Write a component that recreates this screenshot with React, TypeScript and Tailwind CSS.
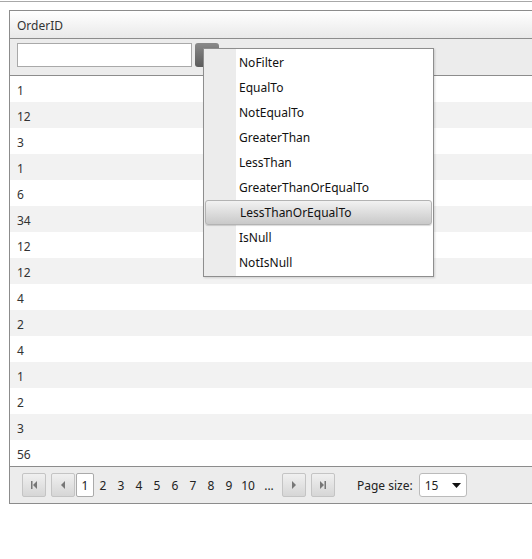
import React from 'react';

const rows = [1, 12, 3, 1, 6, 34, 12, 12, 4, 2, 4, 1, 2, 3, 56];
const filters = [
  'NoFilter',
  'EqualTo',
  'NotEqualTo',
  'GreaterThan',
  'LessThan',
  'GreaterThanOrEqualTo',
  'LessThanOrEqualTo',
  'IsNull',
  'NotIsNull',
];

function PagerButton({ kind }: { kind: 'first' | 'prev' | 'next' | 'last' }) {
  return (
    <div className="w-6 h-6 rounded-[2px] border border-[#c4c4c4] bg-gradient-to-b from-[#f0f0f0] to-[#d6d6d6] flex items-center justify-center">
      <svg width="10" height="10" viewBox="0 0 10 10">
        {kind === 'first' && (
          <>
            <rect x="2" y="1" width="1.5" height="8" fill="#777" />
            <path d="M8 1 L4 5 L8 9 Z" fill="#777" />
          </>
        )}
        {kind === 'prev' && <path d="M7 1 L3 5 L7 9 Z" fill="#777" />}
        {kind === 'next' && <path d="M3 1 L7 5 L3 9 Z" fill="#777" />}
        {kind === 'last' && (
          <>
            <path d="M2 1 L6 5 L2 9 Z" fill="#777" />
            <rect x="6.5" y="1" width="1.5" height="8" fill="#777" />
          </>
        )}
      </svg>
    </div>
  );
}

export default function App() {
  return (
    <div className="w-[532px] h-[559px] overflow-hidden bg-white text-[12px] text-[#333] font-['Segoe_UI','Noto_Sans',sans-serif] pt-px">
      <div className="h-px bg-[#a8a8a8]" />
      <div className="relative ml-[9px] mt-2 w-[560px] border border-[#8c8c8c]">
        {/* Header */}
        <div className="h-[28px] flex items-center pl-[7px] pt-[2px] bg-gradient-to-b from-white to-[#e9e9e9] border-b border-[#8c8c8c]">
          OrderID
        </div>

        {/* Filter row */}
        <div className="h-[37px] flex items-start pt-1 gap-[3px] pl-[7px] bg-[#ececec] border-b border-[#8c8c8c]">
          <div className="w-[175px] h-6 bg-white border border-[#a9a9a9]" />
          <div className="w-6 h-6 rounded-[3px] bg-gradient-to-b from-[#8a8a8a] to-[#5c5c5c]" />
        </div>

        {/* Rows */}
        {rows.map((r, i) => (
          <div key={i} className={`h-[26px] flex items-center pl-[7px] pt-[3px] ${i % 2 === 1 ? 'bg-[#f2f2f2]' : 'bg-white'}`}>
            {r}
          </div>
        ))}

        {/* Pager */}
        <div className="h-[37px] flex items-center bg-[#ececec] border-t border-[#8c8c8c] pl-3 text-[#222]">
          <PagerButton kind="first" />
          <div className="w-[5px]" />
          <PagerButton kind="prev" />
          <div className="w-px" />
          <div className="w-[18px] h-6 bg-white border border-[#aaa] rounded-[2px] flex items-center justify-center pt-px">1</div>
          {[2, 3, 4, 5, 6, 7, 8, 9].map((n) => (
            <span key={n} className="w-[18px] text-center pt-px">{n}</span>
          ))}
          <span className="w-[20px] text-center pt-px">10</span>
          <span className="w-[22px] text-center pt-px">...</span>
          <div className="w-[2px]" />
          <PagerButton kind="next" />
          <div className="w-[5px]" />
          <PagerButton kind="last" />
          <span className="ml-[22px] mr-[6px] pt-px">Page size:</span>
          <div className="w-12 h-6 bg-white border border-[#bbb] rounded-[3px] flex items-center justify-between pl-[5px] pr-[5px]">
            <span className="pt-px">15</span>
            <svg width="9" height="5" viewBox="0 0 9 5">
              <path d="M0 0 L9 0 L4.5 5 Z" fill="#111" />
            </svg>
          </div>
        </div>

        {/* Filter menu */}
        <div className="absolute left-[193px] top-[37px] w-[231px] bg-white border border-[#8e8e8e] py-[1px] shadow-[1px_1px_2px_rgba(0,0,0,0.15)]">
          <div className="absolute left-0 top-0 bottom-0 w-8 bg-[#ececec]" />
          {filters.map((f) => (
            <div
              key={f}
              className={`relative h-[25px] flex items-center pl-[34px] mx-px ${
                f === 'LessThanOrEqualTo'
                  ? 'rounded-[3px] border border-[#b3b3b3] bg-gradient-to-b from-[#f2f2f2] to-[#c9c9c9] shadow-[0_1px_1px_rgba(0,0,0,0.15)] pl-[33px]'
                  : ''
              }`}
            >
              <span className="text-[#111]">{f}</span>
            </div>
          ))}
        </div>
      </div>
    </div>
  );
}
